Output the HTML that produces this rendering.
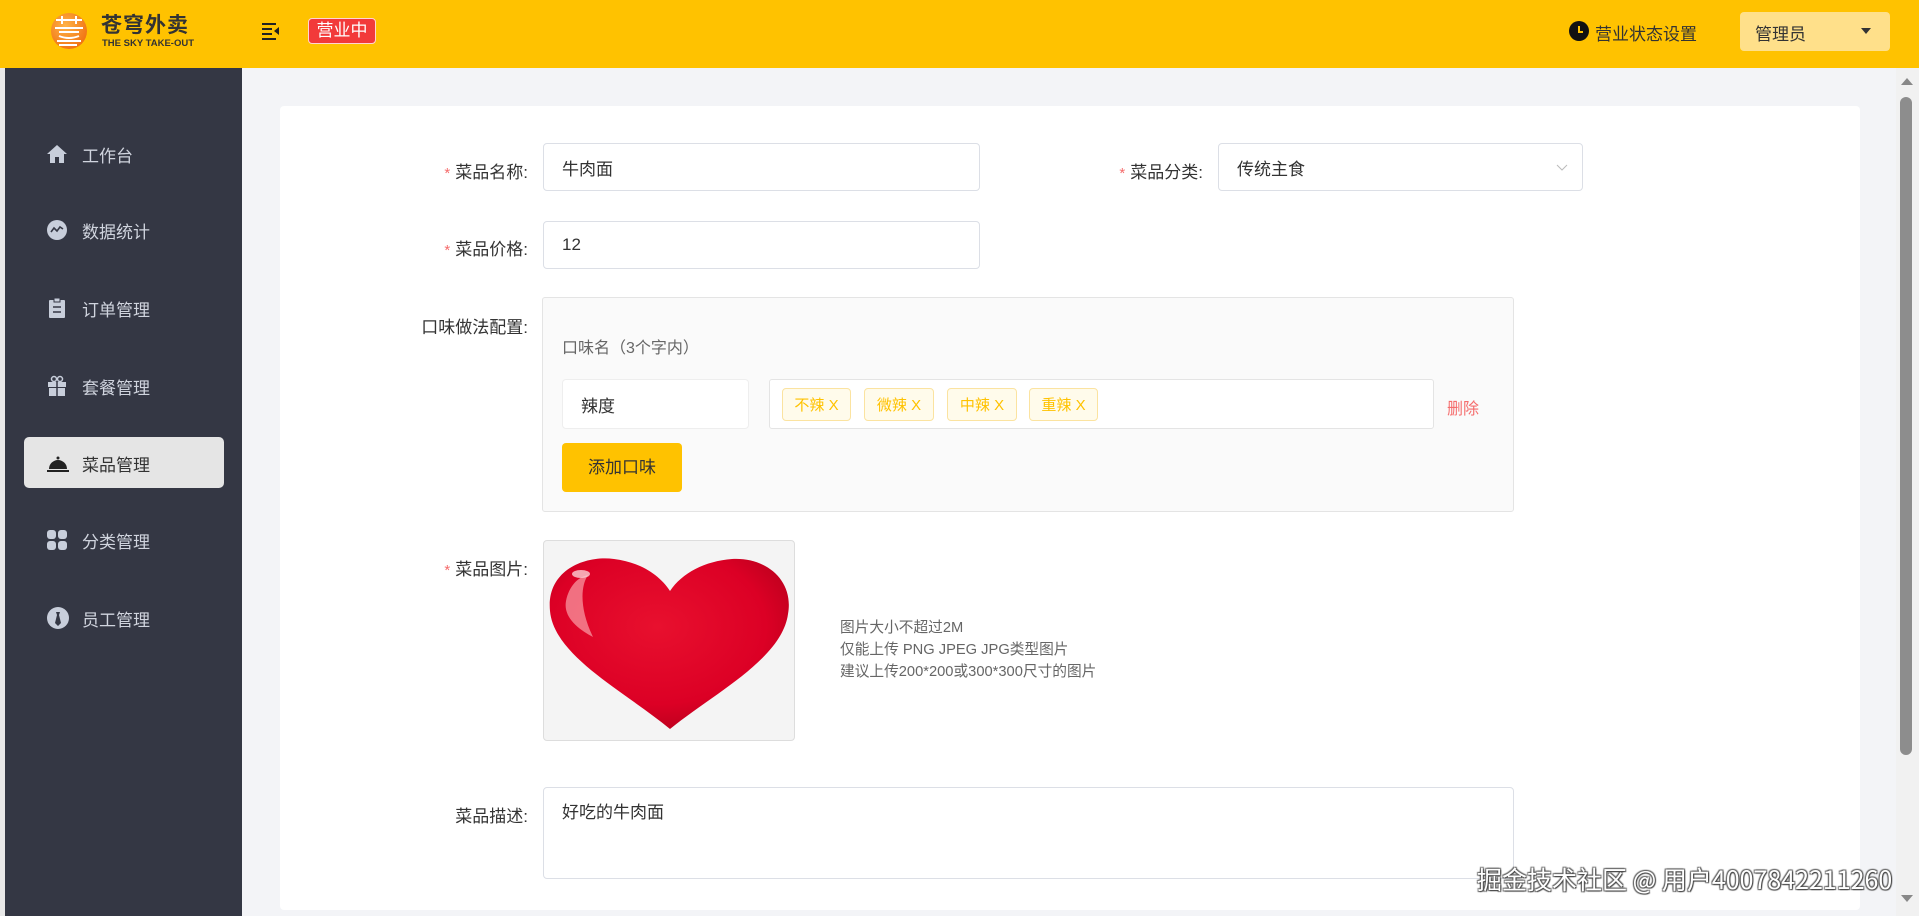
<!DOCTYPE html>
<html><head><meta charset="utf-8"><style>
*{box-sizing:border-box;margin:0;padding:0}
body{width:1919px;height:916px;overflow:hidden;background:#f3f4f7;font-family:"Liberation Sans","Noto Sans CJK SC",sans-serif;position:relative;color:#333}
.abs{position:absolute}
.hdr{left:0;top:0;width:1919px;height:68px;background:#ffc200}
.side{left:5px;top:68px;width:237px;height:848px;background:#343744}
.nav{position:absolute;left:0;width:237px;height:50px;color:#d0d4de;font-size:17px;display:flex;align-items:center}
.nav svg{position:absolute;left:41px}
.nav span{position:absolute;left:77px}
.card{left:280px;top:106px;width:1580px;height:804px;background:#fff;border-radius:4px}
.lbl{position:absolute;font-size:17px;color:#333;text-align:right;width:200px}
.lbl i{color:#f56c6c;font-style:normal;font-size:15px;margin-right:5px}
.inp{position:absolute;border:1px solid #dcdfe6;border-radius:4px;background:#fff;font-size:17px;color:#333;padding-left:18px;display:flex;align-items:center}
.tag{position:absolute;top:388px;height:33px;border:1px solid #fbe3a0;background:#fffbeb;color:#ffc200;font-size:15px;border-radius:4px;display:flex;align-items:center;justify-content:center}
</style></head><body>
<div class="abs" style="left:0;top:0;width:5px;height:916px;background:#e8e8e8"></div>
<div class="abs hdr"></div>
<svg class="abs" style="left:50px;top:12px" width="38" height="38" viewBox="0 0 38 38"><defs><radialGradient id="lg" cx="40%" cy="35%" r="70%"><stop offset="0" stop-color="#ffb347"/><stop offset="1" stop-color="#f07010"/></radialGradient></defs><circle cx="19" cy="19" r="18" fill="url(#lg)"/><path d="M6 8h26M12 4v8M26 4v8M5 16h28M9 20h20M9 24q10 4 20 0M7 29h24M9 33h18" stroke="#fff" stroke-width="2" fill="none"/></svg>
<div class="abs" style="left:101px;top:15px;font-size:21px;line-height:21px;font-weight:bold;color:#333;letter-spacing:1px">苍穹外卖</div>
<div class="abs" style="left:102px;top:39px;font-size:9.5px;line-height:10px;font-weight:bold;color:#333">THE SKY TAKE-OUT</div>
<svg class="abs" style="left:261px;top:22px" width="20" height="18" viewBox="0 0 20 18"><path d="M1 2h14M1 7h10M1 12h10M1 17h14" stroke="#222" stroke-width="2"/><path d="M18 5l-5 4 5 4z" fill="#222"/></svg>
<div class="abs" style="left:308px;top:18px;width:68px;height:26px;background:#f23a3a;border:1px solid #ffd3d3;border-radius:4px;color:#fff;font-size:17px;text-align:center;line-height:24px">营业中</div>
<svg class="abs" style="left:1569px;top:21px" width="20" height="20" viewBox="0 0 20 20"><circle cx="10" cy="10" r="10" fill="#111"/><path d="M10 5v6h4" stroke="#ffc200" stroke-width="2" fill="none"/></svg>
<div class="abs" style="left:1595px;top:20px;font-size:17px;color:#333">营业状态设置</div>
<div class="abs" style="left:1740px;top:12px;width:150px;height:39px;background:#ffe08a;border-radius:4px"></div>
<div class="abs" style="left:1755px;top:20px;font-size:17px;color:#333">管理员</div>
<div class="abs" style="left:1861px;top:28px;width:0;height:0;border-left:5px solid transparent;border-right:5px solid transparent;border-top:6px solid #333"></div>

<div class="abs side">
<div class="nav" style="top:61px"><svg width="22" height="20" viewBox="0 0 22 20"><path d="M11 1L1 10h3v9h5v-6h4v6h5v-9h3z" fill="#c8cedb"/></svg><span>工作台</span></div>
<div class="nav" style="top:137px"><svg width="22" height="22" viewBox="0 0 22 22"><circle cx="11" cy="11" r="10" fill="#c8cedb"/><path d="M5 13l3-4 3 3 3-4 3 2" stroke="#343744" stroke-width="1.6" fill="none"/></svg><span>数据统计</span></div>
<div class="nav" style="top:215px"><svg width="22" height="22" viewBox="0 0 22 22"><rect x="3" y="3" width="16" height="18" rx="1" fill="#c8cedb"/><rect x="8" y="1" width="6" height="4" fill="#c8cedb" stroke="#343744"/><path d="M7 10h8M7 15h8" stroke="#343744" stroke-width="1.6"/></svg><span>订单管理</span></div>
<div class="nav" style="top:293px"><svg width="22" height="22" viewBox="0 0 22 22"><rect x="2" y="7" width="18" height="5" fill="#c8cedb"/><rect x="3" y="13" width="16" height="8" fill="#c8cedb"/><path d="M11 7v14" stroke="#343744" stroke-width="1.5"/><circle cx="8" cy="4" r="2.5" fill="none" stroke="#c8cedb" stroke-width="1.5"/><circle cx="14" cy="4" r="2.5" fill="none" stroke="#c8cedb" stroke-width="1.5"/></svg><span>套餐管理</span></div>
<div class="abs" style="left:19px;top:369px;width:200px;height:51px;background:#e5e5e5;border-radius:5px"></div>
<div class="nav" style="top:370px;color:#333"><svg width="24" height="20" viewBox="0 0 24 20"><path d="M3 16a9 9 0 0 1 18 0z" fill="#222"/><circle cx="12" cy="5" r="1.5" fill="#222"/><path d="M1 18h22" stroke="#222" stroke-width="2"/></svg><span>菜品管理</span></div>
<div class="nav" style="top:447px"><svg width="22" height="22" viewBox="0 0 22 22"><rect x="1" y="1" width="9" height="9" rx="3" fill="#c8cedb"/><rect x="12" y="1" width="9" height="9" rx="3" fill="#c8cedb"/><rect x="1" y="12" width="9" height="9" rx="3" fill="#c8cedb"/><rect x="12" y="12" width="9" height="9" rx="3" fill="#c8cedb"/></svg><span>分类管理</span></div>
<div class="nav" style="top:525px"><svg width="24" height="24" viewBox="0 0 24 24"><circle cx="12" cy="12" r="11" fill="#c8cedb"/><path d="M10 6h4l-1 3 2 8-3 3-3-3 2-8z" fill="#343744"/></svg><span>员工管理</span></div>
</div>

<div class="abs card"></div>
<div class="lbl" style="left:328px;top:158px"><i>*</i>菜品名称:</div>
<div class="inp" style="left:543px;top:143px;width:437px;height:48px">牛肉面</div>
<div class="lbl" style="left:1003px;top:158px"><i>*</i>菜品分类:</div>
<div class="inp" style="left:1218px;top:143px;width:365px;height:48px">传统主食<svg style="position:absolute;right:14px;top:20px" width="12" height="8" viewBox="0 0 12 8"><path d="M1 1l5 5 5-5" stroke="#bbb" fill="none"/></svg></div>
<div class="lbl" style="left:328px;top:235px"><i>*</i>菜品价格:</div>
<div class="inp" style="left:543px;top:221px;width:437px;height:48px">12</div>
<div class="lbl" style="left:328px;top:313px">口味做法配置:</div>
<div class="abs" style="left:542px;top:297px;width:972px;height:215px;background:#fafafa;border:1px solid #e4e4e4;border-radius:3px"></div>
<div class="abs" style="left:562px;top:334px;font-size:16px;color:#666">口味名（3个字内）</div>
<div class="inp" style="left:562px;top:379px;width:187px;height:50px;border-color:#eee">辣度</div>
<div class="abs" style="left:769px;top:379px;width:665px;height:50px;background:#fff;border:1px solid #e4e4e4;border-radius:3px"></div>
<div class="tag" style="left:782px;width:69px">不辣 X</div>
<div class="tag" style="left:864px;width:70px">微辣 X</div>
<div class="tag" style="left:947px;width:70px">中辣 X</div>
<div class="tag" style="left:1029px;width:69px">重辣 X</div>
<div class="abs" style="left:1447px;top:395px;font-size:16px;color:#f56c6c">删除</div>
<div class="abs" style="left:562px;top:443px;width:120px;height:49px;background:#ffc200;border-radius:4px;font-size:17px;color:#333;text-align:center;line-height:49px">添加口味</div>
<div class="lbl" style="left:328px;top:555px"><i>*</i>菜品图片:</div>
<div class="abs" style="left:543px;top:540px;width:252px;height:201px;background:#f4f4f4;border:1px solid #ddd;border-radius:4px;overflow:hidden">
<svg width="252" height="201" viewBox="0 0 252 201"><defs><radialGradient id="hg" cx="45%" cy="40%" r="65%"><stop offset="0" stop-color="#e8102e"/><stop offset=".7" stop-color="#dc0025"/><stop offset="1" stop-color="#b8001c"/></radialGradient></defs><path d="M126 188C80 150 10 115 6 70 2 30 40 14 70 18c25 3 45 15 56 32 12-18 35-30 62-32 35-2 62 22 56 55-6 45-75 80-118 115z" fill="url(#hg)"/><path d="M22 60c3-15 12-24 22-26-8 12-8 35 5 62-15-8-30-20-27-36z" fill="#f9a0a8" opacity=".7"/><ellipse cx="37" cy="33" rx="9" ry="4" fill="#fbd0d5" opacity=".8"/></svg></div>
<div class="abs" style="left:840px;top:617px;font-size:14.7px;color:#666;line-height:22px">图片大小不超过2M<br>仅能上传 PNG JPEG JPG类型图片<br>建议上传200*200或300*300尺寸的图片</div>
<div class="lbl" style="left:328px;top:802px">菜品描述:</div>
<div class="abs" style="left:543px;top:787px;width:971px;height:92px;border:1px solid #dcdfe6;border-radius:4px;font-size:17px;padding:10px 0 0 18px">好吃的牛肉面</div>

<div class="abs" style="left:1896px;top:68px;width:23px;height:848px;background:#f1f1f1"></div>
<div class="abs" style="left:1901px;top:78px;width:0;height:0;border-left:6px solid transparent;border-right:6px solid transparent;border-bottom:7px solid #888"></div>
<div class="abs" style="left:1900px;top:97px;width:12px;height:658px;background:#8d8d8d;border-radius:6px"></div>
<div class="abs" style="left:1901px;top:895px;width:0;height:0;border-left:6px solid transparent;border-right:6px solid transparent;border-top:7px solid #888"></div>
<div class="abs" style="left:1477px;top:861px;font-size:25px;color:#fff;text-shadow:1px 1px 1px #444,-1px -1px 1px #666,1px -1px 1px #666,-1px 1px 1px #666;font-family:'Noto Sans CJK SC','Liberation Sans',sans-serif">掘金技术社区 @ 用户4007842211260</div>
</body></html>
